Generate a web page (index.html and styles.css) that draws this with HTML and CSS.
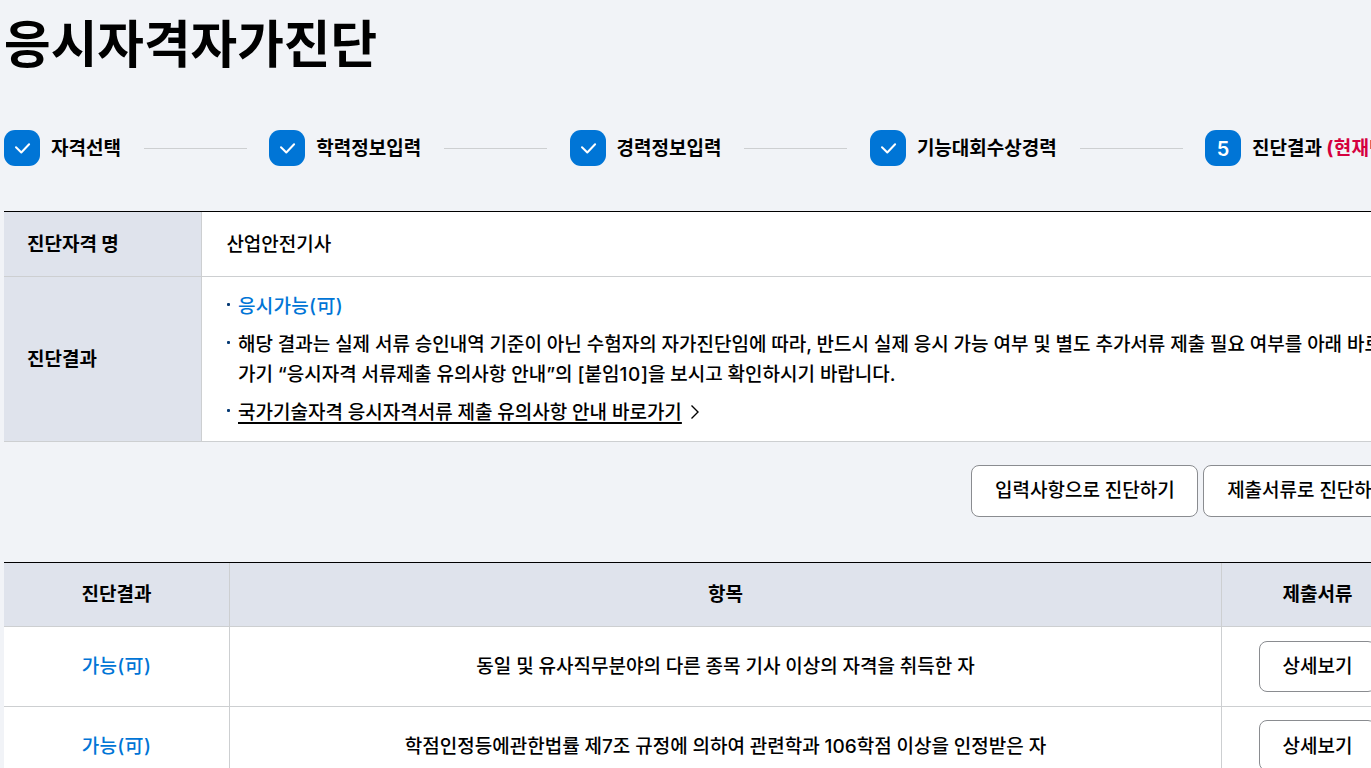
FILE: index.html
```html
<!DOCTYPE html>
<html lang="ko">
<head>
<meta charset="utf-8">
<title>응시자격자가진단</title>
<link rel="stylesheet" href="styles.css">
</head>
<body>
<main class="page">
  <h1 class="title">응시자격자가진단</h1>
  <ol class="steps">
    <li class="step"><span class="badge"><svg class="check" viewBox="0 0 36 36"><path d="M12 17.3l5.3 5.2 7.8-8.3"/></svg></span><span class="step-name">자격선택</span></li>
    <li class="step"><span class="badge"><svg class="check" viewBox="0 0 36 36"><path d="M12 17.3l5.3 5.2 7.8-8.3"/></svg></span><span class="step-name">학력정보입력</span></li>
    <li class="step"><span class="badge"><svg class="check" viewBox="0 0 36 36"><path d="M12 17.3l5.3 5.2 7.8-8.3"/></svg></span><span class="step-name">경력정보입력</span></li>
    <li class="step"><span class="badge"><svg class="check" viewBox="0 0 36 36"><path d="M12 17.3l5.3 5.2 7.8-8.3"/></svg></span><span class="step-name">기능대회수상경력</span></li>
    <li class="step"><span class="badge"><span class="num">5</span></span><span class="step-name">진단결과 <em class="now">(현재단계)</em></span></li>
  </ol>

  <section class="summary">
    <div class="summary-row name-row">
      <div class="label">진단자격 명</div>
      <div class="value">산업안전기사</div>
    </div>
    <div class="summary-row result-row">
      <div class="label">진단결과</div>
      <ul class="value notes">
        <li class="blue">응시가능(可)</li>
        <li>해당 결과는 실제 서류 승인내역 기준이 아닌 수험자의 자가진단임에 따라, 반드시 실제 응시 가능 여부 및 별도 추가서류 제출 필요 여부를 아래 바로<br>가기 “응시자격 서류제출 유의사항 안내”의 [붙임<span class="ten">10</span>]을 보시고 확인하시기 바랍니다.</li>
        <li><a class="link" href="#">국가기술자격 응시자격서류 제출 유의사항 안내 바로가기</a><svg class="arrow" viewBox="0 0 10 16"><path d="M1.500 1.500L8 8l-6.500 6.500"/></svg></li>
      </ul>
    </div>
  </section>

  <div class="actions">
    <button class="btn">입력사항으로 진단하기</button>
    <button class="btn">제출서류로 진단하기</button>
  </div>

  <section class="grid">
    <div class="grid-row head"><div>진단결과</div><div>항목</div><div>제출서류</div></div>
    <div class="grid-row"><div class="blue">가능(可)</div><div>동일 및 유사직무분야의 다른 종목 기사 이상의 자격을 취득한 자</div><div><button class="btn detail">상세보기</button></div></div>
    <div class="grid-row"><div class="blue">가능(可)</div><div>학점인정등에관한법률 제7조 규정에 의하여 관련학과 106학점 이상을 인정받은 자</div><div><button class="btn detail">상세보기</button></div></div>
  </section>
</main>
</body>
</html>
```
FILE: styles.css
```css
* { box-sizing: border-box; }
html, body { height: 100%; overflow: hidden; }
body {
  margin: 0;
  background: #f1f3f7;
  color: #000;
  font: 500 19px/30px Inter, "Noto Sans CJK KR", sans-serif;
  word-spacing: -0.2px;
  white-space: nowrap;
}
.page { width: 1409px; margin-left: 4px; }
.title { margin: 0; padding-top: 9px; font-size: 50.7px; line-height: 72px; font-weight: 700; }
.steps { display: flex; align-items: center; gap: 22.4px; height: 36px; margin: 49px 0 45px; padding: 0; list-style: none; font-weight: 700; }
.step { display: flex; align-items: center; }
.step:not(:last-child)::after { content: ""; width: 103px; height: 1px; margin-left: 23px; background: #cdcfd1; }
.step-name { padding-top: 2px; }
.badge { display: flex; align-items: center; justify-content: center; width: 36px; height: 36px; margin-right: 11px; border-radius: 11px; background: #0075d6; color: #fff; font-weight: 600; font-size: 20px; }
.num { padding-top: 2px; }
.check { width: 36px; height: 36px; fill: none; stroke: #fff; stroke-width: 2; stroke-linecap: round; stroke-linejoin: round; }
.now { color: #d5003f; font-style: normal; letter-spacing: 0.2px; }

.summary { border-top: 1px solid #000; }
.summary-row { display: grid; grid-template-columns: 198px 1fr; border-bottom: 1px solid #cdcfd1; }
.name-row { height: 65px; }
.result-row { height: 165px; }
.label { display: flex; align-items: center; padding: 2px 0 0 23px; background: #dfe3ec; border-right: 1px solid #cdcfd1; font-weight: 700; }
.value { display: flex; align-items: center; padding: 2px 0 0 24.4px; background: #fff; }
.notes { flex-direction: column; align-items: flex-start; justify-content: center; gap: 8px; margin: 0; padding-left: 24px; list-style: none; }
.notes li { position: relative; padding-left: 12px; }
.notes li::before { content: ""; position: absolute; left: 1px; top: 11px; width: 3px; height: 3px; border-radius: 1px; background: #063a74; }
.blue { color: #0075d6; letter-spacing: 0.3px; }
.ten { letter-spacing: 0.7px; }
.link { color: #000; text-decoration: underline; text-decoration-thickness: 2px; text-underline-offset: 3px; text-decoration-skip-ink: none; }
.arrow { width: 10px; height: 16px; margin-left: 8px; vertical-align: -1px; fill: none; stroke: #000; stroke-width: 1.4; }

.actions { display: flex; justify-content: flex-end; gap: 5px; margin: 23px 0 45px; }
.btn { height: 52px; padding: 0 22.7px; border: 1px solid #8a8c90; border-radius: 8px; background: #fff; color: #000; font: inherit; word-spacing: inherit; }
.detail { height: 51px; }
.grid-row:last-child .detail { margin-bottom: 2px; padding-top: 2px; }

.grid { border-top: 1px solid #000; text-align: center; }
.grid-row { display: grid; grid-template-columns: 226px 992px 191px; height: 80px; border-bottom: 1px solid #cdcfd1; background: #fff; }
.grid-row > div { display: flex; align-items: center; justify-content: center; border-right: 1px solid #cdcfd1; }
.grid-row > div:last-child { border-right: 0; }
.head { height: 64px; background: #dfe3ec; font-weight: 700; }
```
